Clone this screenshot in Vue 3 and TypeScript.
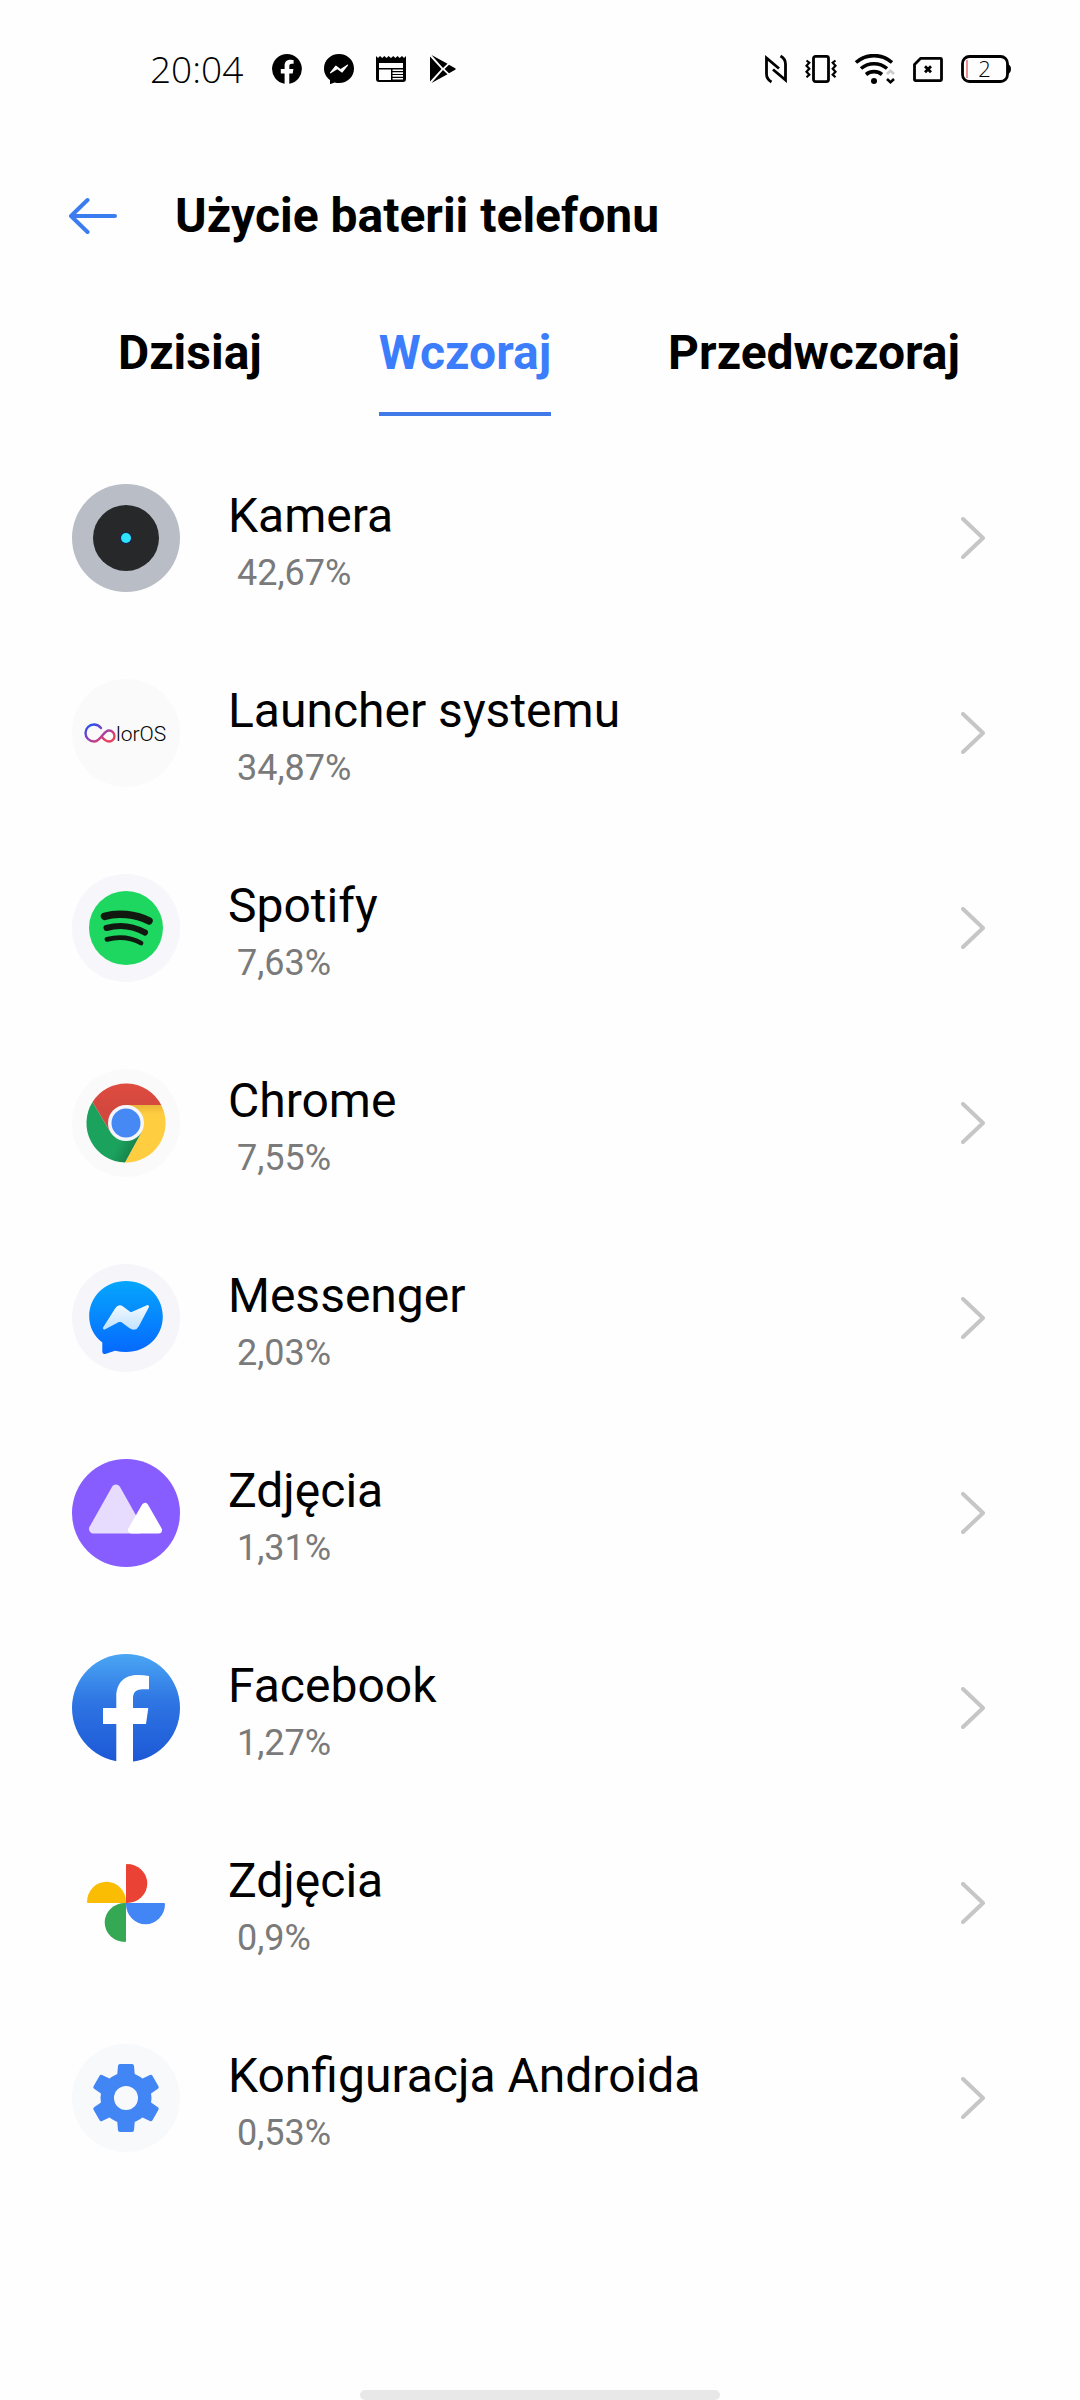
<script setup lang="ts">
import { ref } from 'vue'

type IconName =
  | 'camera'
  | 'coloros'
  | 'spotify'
  | 'chrome'
  | 'messenger'
  | 'gallery'
  | 'facebook'
  | 'photos'
  | 'setup'

interface AppUsage {
  name: string
  share: string
  icon: IconName
}

const tabs = ['Dzisiaj', 'Wczoraj', 'Przedwczoraj']
const activeTab = ref('Wczoraj')

const apps: AppUsage[] = [
  { name: 'Kamera', share: '42,67%', icon: 'camera' },
  { name: 'Launcher systemu', share: '34,87%', icon: 'coloros' },
  { name: 'Spotify', share: '7,63%', icon: 'spotify' },
  { name: 'Chrome', share: '7,55%', icon: 'chrome' },
  { name: 'Messenger', share: '2,03%', icon: 'messenger' },
  { name: 'Zdjęcia', share: '1,31%', icon: 'gallery' },
  { name: 'Facebook', share: '1,27%', icon: 'facebook' },
  { name: 'Zdjęcia', share: '0,9%', icon: 'photos' },
  { name: 'Konfiguracja Androida', share: '0,53%', icon: 'setup' },
]

const teeth = [0, 60, 120, 180, 240, 300]
</script>

<template>
  <div class="screen">
    <div class="status">
      <div class="status-left">
        <span class="time">20:04</span>
        <svg width="30" height="30" viewBox="0 0 30 30" aria-hidden="true">
          <path d="M15 0a15 15 0 0 0-2.400 29.800V19.400H8.800V15h3.800v-3.300c0-3.800 2.200-5.900 5.700-5.900 1.600 0 3.300.3 3.300.3v3.700h-1.900c-1.900 0-2.400 1.100-2.400 2.300V15h4.100l-.7 4.400h-3.400v10.400A15 15 0 0 0 15 0z" />
        </svg>
        <svg width="30" height="30" viewBox="0 0 30 30" aria-hidden="true">
          <path d="M15 0c8.500 0 15 6.200 15 14.500S23.500 29 15 29c-1.600 0-3-.2-4.400-.6L6 30.200V26C2.300 23.400 0 19.300 0 14.500 0 6.200 6.500 0 15 0z" />
          <path d="M6.500 18.800l5.400-6.600 4.600 3.600 7-4.600-5.400 6.800-4.800-3.400z" fill="#fff" stroke="#fff" stroke-width="1.200" stroke-linejoin="round" />
        </svg>
        <svg width="30" height="30" viewBox="0 0 30 30" aria-hidden="true">
          <path d="M0 2l2 2 2-2 2.300 2 2-2 2.300 2 2-2L15 4l2.300-2 2 2 2.300-2 2 2L26 2l2 2 2-2v23a3 3 0 0 1-3 3H3a3 3 0 0 1-3-3z" />
          <path d="M3 9h24v5H3zM3 15.500h12V26H3zM16.500 15.500H27v1.600H16.500zM16.500 18.300H27v1.600H16.500zM16.500 21.100H27v1.600H16.500zM16.500 23.900H27v1.600H16.500z" fill="#fff" />
        </svg>
        <svg width="30" height="30" viewBox="0 0 30 30" aria-hidden="true">
          <path d="M2 2.500L13.500 15 2 27.500zM3.500 1L19.500 9.800 15 14zM3.500 29L19.500 20.200 15 16zM21 10.800l6.200 3.400q1.200.8 0 1.600L21 19.200 16.500 15z" />
        </svg>
      </div>
      <div class="status-right">
        <svg width="22" height="30" viewBox="0 0 22 30" fill="none" stroke="#000" stroke-width="2.800" aria-hidden="true">
          <path d="M6.500 28C3 26 1.500 24 1.500 20V4L14 14.500M15.500 2c3.500 2 5 4 5 8v16L8 15.500" />
        </svg>
        <svg width="32" height="30" viewBox="0 0 32 30" fill="none" stroke="#000" stroke-width="2.800" aria-hidden="true">
          <rect x="8.500" y="2.400" width="15" height="25.200" rx="2" />
          <path d="M1.500 6.500l2.800 2.200-2.800 3 2.800 3-2.800 3 2.800 3-2.800 2.500M30.500 6.500l-2.800 2.200 2.800 3-2.800 3 2.800 3-2.800 3 2.800 2.500" stroke-width="2.200" />
        </svg>
        <svg width="40" height="30" viewBox="0 0 40 30" fill="none" stroke="#000" stroke-width="3.600" aria-hidden="true">
          <path d="M1 8.500a27 27 0 0 1 36 0M6 14.500a20 20 0 0 1 26 0M11 20.500a12.500 12.500 0 0 1 16 0" />
          <circle cx="19" cy="27" r="3" fill="#000" stroke="none" />
          <path d="M32 20l3.500-3.200L39 20" stroke="#ccc" stroke-width="2.600" />
          <path d="M32 25l3.500 3.200L39 25" stroke-width="2.600" />
        </svg>
        <svg width="30" height="30" viewBox="0 0 30 30" fill="none" stroke="#000" stroke-width="2.800" aria-hidden="true">
          <path d="M7.500 4.400h20a1 1 0 0 1 1 1v20.200a1 1 0 0 1-1 1h-25a1 1 0 0 1-1-1V10.400z" stroke-linejoin="round" />
          <path d="M12 12.200l6 6M18 12.200l-6 6" />
        </svg>
        <svg width="50" height="30" viewBox="0 0 50 30" aria-hidden="true">
          <rect x="1.500" y="2.500" width="45" height="25" rx="7" fill="none" stroke="#000" stroke-width="2.800" />
          <path d="M6 6v18" stroke="#e0474c" stroke-width="1.200" />
          <path d="M47 10q3 1.500 3 5t-3 5z" />
          <text x="23.500" y="23" text-anchor="middle" class="charge">2</text>
        </svg>
      </div>
    </div>

    <header class="header">
      <button class="back" type="button" aria-label="Wstecz">
        <svg width="48" height="40" viewBox="0 0 48 40" fill="none" stroke="#3b7cf0" stroke-width="4" stroke-linecap="round" stroke-linejoin="round" aria-hidden="true">
          <path d="M46 20H2M18.500 4L2 20l16.500 16" />
        </svg>
      </button>
      <h1>Użycie baterii telefonu</h1>
    </header>

    <nav class="tabs">
      <button
        v-for="tab in tabs"
        :key="tab"
        type="button"
        class="tab"
        :class="{ active: tab === activeTab }"
        @click="activeTab = tab"
      >
        {{ tab }}
      </button>
    </nav>

    <ul class="list">
      <li v-for="app in apps" :key="app.icon">
        <a class="row" href="#">
          <svg class="icon" width="108" height="108" viewBox="0 0 108 108" aria-hidden="true">
            <template v-if="app.icon === 'camera'">
              <circle cx="54" cy="54" r="54" fill="#b9bdc6" />
              <circle cx="54" cy="54" r="33" fill="#26282a" />
              <circle cx="54" cy="54" r="6" fill="#10255e" />
              <circle cx="54" cy="54" r="5" fill="#2fe3fb" />
            </template>

            <template v-else-if="app.icon === 'coloros'">
              <defs>
                <linearGradient id="loop" x1="20" y1="45" x2="30" y2="63" gradientUnits="userSpaceOnUse">
                  <stop offset="0" stop-color="#2b50e8" />
                  <stop offset="0.500" stop-color="#8a3fc0" />
                  <stop offset="1" stop-color="#e8405f" />
                </linearGradient>
              </defs>
              <circle cx="54" cy="54" r="54" fill="#fafafa" />
              <path d="M29 49C27 46.500 24.500 45.500 22 45.500a8.500 8.500 0 0 0 0 17C29 62.500 31 51.500 37 51.500a5.500 5.500 0 0 1 0 11C33.500 62.500 31.500 60 29.500 57.500" fill="none" stroke="url(#loop)" stroke-width="2.400" stroke-linecap="round" />
              <text x="44" y="62" class="wordmark">lorOS</text>
            </template>

            <template v-else-if="app.icon === 'spotify'">
              <circle cx="54" cy="54" r="54" fill="#f6f6fb" />
              <circle cx="54" cy="54" r="37" fill="#1ed760" />
              <g fill="none" stroke="#10180f" stroke-linecap="round">
                <path d="M32.500 42.300C46 38.500 63 40 77 46.800" stroke-width="7.500" />
                <path d="M34.500 54C47 50.500 61 52 73 58.500" stroke-width="6" />
                <path d="M35 65.300C47 62.500 59 63.500 69 69" stroke-width="4.800" />
              </g>
            </template>

            <template v-else-if="app.icon === 'chrome'">
              <defs>
                <linearGradient id="redShade" x1="0" y1="15" x2="0" y2="38" gradientUnits="userSpaceOnUse">
                  <stop offset="0" stop-color="#df4b40" />
                  <stop offset="1" stop-color="#d3483e" />
                </linearGradient>
                <linearGradient id="yellowShade" x1="0" y1="36" x2="0" y2="45" gradientUnits="userSpaceOnUse">
                  <stop offset="0" stop-color="#e8b53a" />
                  <stop offset="1" stop-color="#ffcd40" />
                </linearGradient>
                <linearGradient id="greenShade" x1="48" y1="72" x2="63" y2="80" gradientUnits="userSpaceOnUse">
                  <stop offset="0" stop-color="#1ba25d" />
                  <stop offset="1" stop-color="#178148" />
                </linearGradient>
              </defs>
              <circle cx="54" cy="54" r="54" fill="#fafafa" />
              <path d="M89.200 36A39.500 39.500 0 0 1 53 93.500L69.600 63 54 54V36z" fill="url(#yellowShade)" />
              <path d="M53 93.500A39.500 39.500 0 0 1 20.500 33L38.400 63 54 54l15.600 9z" fill="url(#greenShade)" />
              <path d="M20.500 33A39.500 39.500 0 0 1 89.200 36H54v18l-15.600 9z" fill="url(#redShade)" />
              <circle cx="54" cy="54" r="18" fill="#f4f6fb" />
              <circle cx="54" cy="54" r="14.500" fill="#4688f4" />
            </template>

            <template v-else-if="app.icon === 'messenger'">
              <defs>
                <linearGradient id="bubble" x1="0" y1="0" x2="0" y2="1">
                  <stop offset="0" stop-color="#06a6fd" />
                  <stop offset="1" stop-color="#0568fe" />
                </linearGradient>
                <linearGradient id="bolt" x1="0" y1="0" x2="0" y2="1">
                  <stop offset="0" stop-color="#f0f8ff" />
                  <stop offset="1" stop-color="#c3e3ff" />
                </linearGradient>
              </defs>
              <circle cx="54" cy="54" r="54" fill="#f6f6fa" />
              <path d="M54 17C33 17 17.200 32.500 17.200 52.500c0 10.500 4.800 19.500 13.100 26V88q.2 2.500 3 2l9.700-3.300q5.500 1.300 11 1.300c21 0 36.800-15.500 36.800-35.500S75 17 54 17z" fill="url(#bubble)" />
              <path d="M32.500 64L44.500 45Q47 41.500 50.500 44L58.500 50 75.500 42.500 65.500 61.500Q63 66 58.500 63L48.500 55.500z" fill="url(#bolt)" stroke="url(#bolt)" stroke-width="3" stroke-linejoin="round" />
            </template>

            <template v-else-if="app.icon === 'gallery'">
              <circle cx="54" cy="54" r="54" fill="#875dff" />
              <path d="M44 30L21.500 70H66.500z" fill="#e7dcfe" stroke="#e7dcfe" stroke-width="9" stroke-linejoin="round" />
              <path d="M73 47.500L59.500 71H86.500z" fill="#fff" stroke="#fff" stroke-width="7" stroke-linejoin="round" />
            </template>

            <template v-else-if="app.icon === 'facebook'">
              <defs>
                <linearGradient id="blue" x1="0" y1="0" x2="0" y2="1">
                  <stop offset="0" stop-color="#4aa6f3" />
                  <stop offset="0.450" stop-color="#2e74e3" />
                  <stop offset="1" stop-color="#1c58d6" />
                </linearGradient>
              </defs>
              <circle cx="54" cy="54" r="54" fill="url(#blue)" />
              <path d="M44.300 108V70H31V54H44.300V43C44.300 28 53 21 66 21q5.500 0 11 1V35.300H70.500C63.500 35.300 61 39 61 44.500V54H76.300L74 70H61V108z" fill="#fff" />
            </template>

            <template v-else-if="app.icon === 'photos'">
              <path d="M55 15a20.300 19.500 0 0 1 0 39H54V16q0-1 1-1z" fill="#ea4335" />
              <path d="M54 54H16q-1 0-1-1a19.500 20.300 0 0 1 39 0z" fill="#fbbc04" />
              <path d="M54 54H92q1 0 1 1a19.500 20.300 0 0 1-39 0z" fill="#4285f4" />
              <path d="M54 54V92q0 1-1 1a20.300 19.500 0 0 1 0-39z" fill="#34a853" />
            </template>

            <template v-else>
              <circle cx="54" cy="54" r="54" fill="#f8f9fb" />
              <g fill="#4285f4">
                <circle cx="54" cy="54" r="25.500" />
                <path v-for="angle in teeth" :key="angle" :transform="`rotate(${angle} 54 54)`" d="M42 35Q44.800 33.500 45.200 31L46 21.800Q46.200 20 48 20H60Q61.800 20 62 21.800L62.800 31Q63.200 33.500 66 35L60 42H48z" />
              </g>
              <circle cx="54" cy="54" r="12" fill="#f8f9fb" />
            </template>
          </svg>

          <span class="text">
            <span class="name">{{ app.name }}</span>
            <span class="share">{{ app.share }}</span>
          </span>

          <svg width="24" height="42" viewBox="0 0 24 42" fill="none" stroke="#c6c6c6" stroke-width="4" stroke-linecap="round" stroke-linejoin="round" aria-hidden="true">
            <path d="M2 2l20 19L2 40" />
          </svg>
        </a>
      </li>
    </ul>

    <div class="home-bar"></div>
  </div>
</template>

<style>
body {
  background: #fefefe;
}
</style>

<style scoped>
.screen {
  display: flex;
  flex-direction: column;
  min-height: 100vh;
  font-family: Roboto, "Noto Sans", sans-serif;
  color: #000;
}

.status {
  display: flex;
  justify-content: space-between;
  align-items: center;
  height: 138px;
  padding: 0 69px 0 150px;
}

.status-left,
.status-right {
  display: flex;
  align-items: center;
}

.status-left {
  gap: 22px;
}

.status-right {
  gap: 18px;
}

.time {
  margin-right: 7px;
  font: 300 37px/48px "Open Sans", sans-serif;
}

.charge {
  font: 300 22px "Open Sans", sans-serif;
}

.header {
  display: flex;
  align-items: center;
  gap: 58px;
  height: 156px;
  padding: 0 69px;
}

.back {
  display: flex;
  padding: 0;
  border: 0;
  background: none;
}

h1 {
  margin: 0;
  font-size: 48px;
  font-weight: 700;
  line-height: 56px;
}

.tabs {
  display: flex;
  justify-content: space-between;
  padding: 31px 120px 0 118px;
}

.tab {
  height: 91px;
  padding: 0 0 31px;
  border: 0;
  border-bottom: 4px solid transparent;
  background: none;
  color: #000;
  font: 700 48px/56px Roboto, sans-serif;
}

.tab.active {
  border-color: #3f7ae8;
  color: #3b7dfb;
}

.list {
  margin: 0;
  padding: 24px 0 0;
  list-style: none;
}

.row {
  display: flex;
  align-items: center;
  gap: 48px;
  height: 195px;
  padding: 0 95px 0 72px;
  color: inherit;
  text-decoration: none;
}

.icon {
  flex: none;
}

.text {
  display: flex;
  flex: 1;
  flex-direction: column;
  gap: 8px;
  padding-top: 6px;
}

.name {
  font-size: 48px;
  line-height: 56px;
}

.share {
  padding-left: 9px;
  color: #7a7a7a;
  font-size: 36px;
  line-height: 42px;
}

.wordmark {
  font: 300 21px Roboto, sans-serif;
}

.home-bar {
  align-self: center;
  width: 33.333%;
  height: 10px;
  margin-top: auto;
  border-radius: 5px;
  background: #e8e8e8;
}
</style>
